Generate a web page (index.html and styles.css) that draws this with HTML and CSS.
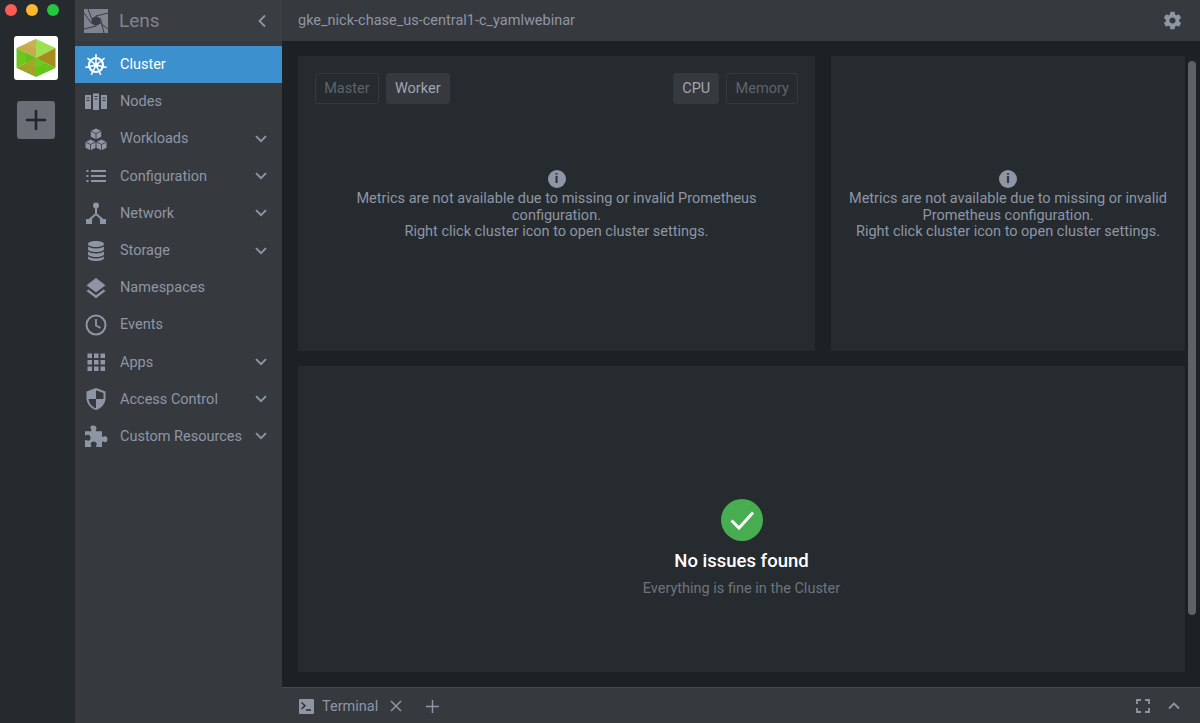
FILE: index.html
```html
<!DOCTYPE html>
<html lang="en">
<head>
    <meta charset="UTF-8">
    <title>Lens</title>
    <link rel="stylesheet" href="styles.css">
</head>
<body>
    <div class="rail">
        <div class="lights">
            <span class="light red"></span>
            <span class="light yellow"></span>
            <span class="light green"></span>
        </div>
        <div class="cluster-tile">
            <svg viewBox="0 0 44 44" width="44" height="44">
                <polygon points="22,3 22,22 2.500,12" fill="#c9ab4f"/>
                <polygon points="22,3 41.500,12 22,22" fill="#9fe052"/>
                <polygon points="2.500,12 22,22 2.500,32" fill="#6cc71f"/>
                <polygon points="41.500,12 41.500,32 22,22" fill="#a98d1c"/>
                <polygon points="2.500,32 22,22 22,41" fill="#a0a22a"/>
                <polygon points="22,22 41.500,32 22,41" fill="#63c51a"/>
                <polygon points="12,17 22,22 12,27" fill="#62c01c"/>
                <polygon points="12,27 22,22 22,32" fill="#a6a628"/>
                <polygon points="22,22 32,27 22,32" fill="#6cca22"/>
                <polygon points="12,7.500 22,3 22,12.500" fill="#ceb155"/>
            </svg>
        </div>
        <div class="add-cluster">
            <svg viewBox="0 0 20 20" width="20" height="20"><path d="M10 0v20M0 10h20" stroke="#23272b" stroke-width="2.600"/></svg>
        </div>
    </div>

    <div class="sidebar">
        <div class="brand">
            <svg class="brand-logo" viewBox="0 0 24 24" width="24" height="24">
                <rect width="24" height="24" fill="#7f8590"/>
                <polygon points="12,7 16.500,9.500 16.500,14.500 12,17 7.500,14.500 7.500,9.500" fill="#3a3d42"/>
                <path d="M7.500 9.500 4 0M12 7 24 4M16.500 9.500 20 24M16.500 14.500 24 20M12 17 0 20M7.500 14.500 0 4" stroke="#3a3d42" stroke-width="1" fill="none"/>
            </svg>
            <span class="brand-name">Lens</span>
            <svg class="collapse" viewBox="0 0 10 14" width="10" height="14"><path d="M8 1.500 2.500 7 8 12.500" fill="none" stroke="#8e96a5" stroke-width="1.800"/></svg>
        </div>
        <ul class="nav">
            <li class="nav-item active">
                <svg class="nav-icon" viewBox="0 0 24 24">
                    <g fill="none" stroke="#fff">
                        <circle cx="12" cy="12" r="7" stroke-width="2.200"/>
                        <path stroke-width="1.500" d="M12 12V1M12 12 20.600 5.100M12 12 22.700 14.400M12 12 16.800 21.900M12 12 7.200 21.900M12 12 1.300 14.400M12 12 3.400 5.100"/>
                    </g>
                    <circle cx="12" cy="12" r="2.600" fill="#fff"/>
                </svg>
                <span>Cluster</span>
            </li>
            <li class="nav-item">
                <svg class="nav-icon" viewBox="0 0 24 24">
                    <path fill="#8e96a5" fill-rule="evenodd" d="M1 5h6v14H1zM9 3.500h6V20H9zM17 5h6v14h-6zM2.500 7.500v1h3v-1zM2.500 10v1h3v-1zM10.500 6v1h3V6zM10.500 8.500v1h3v-1zM18.500 7.500v1h3v-1zM18.500 10v1h3v-1z"/>
                </svg>
                <span>Nodes</span>
            </li>
            <li class="nav-item">
                <svg class="nav-icon" viewBox="0 0 24 24">
                    <path fill="#8e96a5" d="M12 1.500l5.200 2.600v5.600L12 12.300 6.800 9.700V4.100zM6.500 12.500l5 2.500v5.800l-5 2.400-5-2.400V15zM17.500 12.500l5 2.500v5.800l-5 2.400-5-2.400V15z"/>
                    <path fill="none" stroke="#36393e" stroke-width=".8" d="M6.800 4.100 12 6.700l5.200-2.600M12 6.700v5.600M1.500 15l5 2.500 5-2.500M6.500 17.500v5.700M12.500 15l5 2.500 5-2.500M17.500 17.500v5.700"/>
                </svg>
                <span>Workloads</span>
                <svg class="chevron" viewBox="0 0 12 8"><path d="M1 1.200 6 6.200 11 1.200" fill="none" stroke="#8e96a5" stroke-width="1.900"/></svg>
            </li>
            <li class="nav-item">
                <svg class="nav-icon" viewBox="0 0 24 24">
                    <path fill="#8e96a5" d="M2.500 6h2v2h-2zM7 6h15v2H7zM2.500 11h2v2h-2zM7 11h15v2H7zM2.500 16h2v2h-2zM7 16h15v2H7z"/>
                </svg>
                <span>Configuration</span>
                <svg class="chevron" viewBox="0 0 12 8"><path d="M1 1.200 6 6.200 11 1.200" fill="none" stroke="#8e96a5" stroke-width="1.900"/></svg>
            </li>
            <li class="nav-item">
                <svg class="nav-icon" viewBox="0 0 24 24">
                    <circle cx="12" cy="4.500" r="3" fill="#8e96a5"/>
                    <path d="M2 18h6v5H2zM16 18h6v5h-6z" fill="#8e96a5"/>
                    <path d="M12 6v7M12 13l-7 6M12 13l7 6" stroke="#8e96a5" stroke-width="2" fill="none"/>
                </svg>
                <span>Network</span>
                <svg class="chevron" viewBox="0 0 12 8"><path d="M1 1.200 6 6.200 11 1.200" fill="none" stroke="#8e96a5" stroke-width="1.900"/></svg>
            </li>
            <li class="nav-item">
                <svg class="nav-icon" viewBox="0 0 24 24">
                    <path fill="#8e96a5" d="M12 2c4.500 0 8 1.200 8 3s-3.500 3-8 3-8-1.200-8-3 3.500-3 8-3zM4 7.500c1.500 1.300 4.500 2 8 2s6.500-.7 8-2V10c0 1.800-3.500 3-8 3s-8-1.200-8-3zM4 12.500c1.500 1.300 4.500 2 8 2s6.500-.7 8-2V15c0 1.800-3.500 3-8 3s-8-1.200-8-3zM4 17.500c1.500 1.300 4.500 2 8 2s6.500-.7 8-2V19c0 1.800-3.500 3-8 3s-8-1.200-8-3z"/>
                </svg>
                <span>Storage</span>
                <svg class="chevron" viewBox="0 0 12 8"><path d="M1 1.200 6 6.200 11 1.200" fill="none" stroke="#8e96a5" stroke-width="1.900"/></svg>
            </li>
            <li class="nav-item">
                <svg class="nav-icon" viewBox="0 0 24 24">
                    <path fill="#8e96a5" d="M12 2l9.500 7.300L12 16.500 2.500 9.300zM4.500 13.500l7.500 5.700 7.500-5.700 2 1.600L12 22.300 2.500 15.100z"/>
                </svg>
                <span>Namespaces</span>
            </li>
            <li class="nav-item">
                <svg class="nav-icon" viewBox="0 0 24 24">
                    <circle cx="12" cy="12" r="9.500" fill="none" stroke="#8e96a5" stroke-width="2"/>
                    <path d="M12 6v6.500l4.500 2.500" fill="none" stroke="#8e96a5" stroke-width="1.800"/>
                </svg>
                <span>Events</span>
            </li>
            <li class="nav-item">
                <svg class="nav-icon" viewBox="0 0 24 24">
                    <path fill="#8e96a5" d="M3.500 3.500h4.500V8H3.500zM10 3.500h4.500V8H10zM16.500 3.500H21V8h-4.500zM3.500 10H8v4.500H3.500zM10 10h4.500v4.500H10zM16.500 10H21v4.500h-4.500zM3.500 16.500H8V21H3.500zM10 16.500h4.500V21H10zM16.500 16.500H21V21h-4.500z"/>
                </svg>
                <span>Apps</span>
                <svg class="chevron" viewBox="0 0 12 8"><path d="M1 1.200 6 6.200 11 1.200" fill="none" stroke="#8e96a5" stroke-width="1.900"/></svg>
            </li>
            <li class="nav-item">
                <svg class="nav-icon" viewBox="0 0 24 24">
                    <path fill="#8e96a5" d="M12 1l9.500 3.600V11c0 5.600-4 10.300-9.500 12C6.500 21.300 2.500 16.600 2.500 11V4.600zM12 3.200V12H4.600c.4 4.300 3.300 7.800 7.400 9.300V12h7.400c.1-.4.100-.7.100-1V6z"/>
                </svg>
                <span>Access Control</span>
                <svg class="chevron" viewBox="0 0 12 8"><path d="M1 1.200 6 6.200 11 1.200" fill="none" stroke="#8e96a5" stroke-width="1.900"/></svg>
            </li>
            <li class="nav-item">
                <svg class="nav-icon" viewBox="0 0 24 24">
                    <path fill="#8e96a5" d="M9 1.500c2.200 0 3.500 1.300 3.500 2.800 0 1-.7 1.500-.7 2.200 0 .5.500.7 1 .7H18v4.800c0 .6.300 1 .8 1 .7 0 1.200-.7 2.200-.7 1.500 0 2.500 1.300 2.500 3s-1 3-2.500 3c-1 0-1.500-.7-2.200-.7-.5 0-.8.400-.8 1V23h-5c-.6 0-1-.3-1-.8 0-.7.700-1.200.7-2.200 0-1.500-1.300-2.500-3-2.500s-3 1-3 2.500c0 1 .7 1.500.7 2.200 0 .5-.4.800-1 .8H1v-6c0-.6.300-1 .8-1 .7 0 1.200.7 2.200.7 1.500 0 2.500-1.300 2.500-3s-1-3-2.500-3c-1 0-1.500.7-2.200.7-.5 0-.8-.4-.8-1V7.200h5.500c.5 0 1-.2 1-.7 0-.7-.8-1.200-.8-2.200C5.700 2.800 6.800 1.500 9 1.500z"/>
                </svg>
                <span>Custom Resources</span>
                <svg class="chevron" viewBox="0 0 12 8"><path d="M1 1.200 6 6.200 11 1.200" fill="none" stroke="#8e96a5" stroke-width="1.900"/></svg>
            </li>
        </ul>
    </div>

    <div class="main">
        <div class="topbar">
            <span class="cluster-name">gke_nick-chase_us-central1-c_yamlwebinar</span>
            <svg class="settings" viewBox="0 0 24 24" width="21" height="21">
                <path fill="#8e96a5" d="M19.430 12.980c.04-.32.070-.64.070-.98s-.030-.66-.070-.98l2.110-1.650c.19-.15.240-.42.120-.64l-2-3.460c-.12-.22-.39-.3-.61-.22l-2.490 1c-.52-.4-1.080-.73-1.690-.98l-.38-2.650C14.460 2.180 14.250 2 14 2h-4c-.25 0-.46.180-.49.420l-.38 2.650c-.61.250-1.170.590-1.690.98l-2.490-1c-.23-.09-.49 0-.61.220l-2 3.460c-.13.220-.07.490.12.640l2.110 1.650c-.04.320-.07.650-.07.980s.030.660.070.980l-2.110 1.650c-.19.150-.24.420-.12.640l2 3.460c.12.220.39.300.61.220l2.490-1c.52.400 1.080.730 1.690.980l.38 2.650c.030.240.240.420.490.420h4c.25 0 .46-.18.490-.42l.38-2.650c.61-.25 1.170-.59 1.690-.98l2.490 1c.23.090.49 0 .61-.22l2-3.460c.12-.22.070-.49-.12-.64zM12 15.500c-1.930 0-3.500-1.570-3.500-3.500s1.570-3.500 3.500-3.500 3.500 1.570 3.500 3.500-1.570 3.500-3.500 3.500z"/>
            </svg>
        </div>

        <div class="content">
            <div class="panel metrics-main">
                <div class="metric-tabs">
                    <div class="tab-group">
                        <span class="tab">Master</span>
                        <span class="tab selected">Worker</span>
                    </div>
                    <div class="tab-group">
                        <span class="tab selected">CPU</span>
                        <span class="tab">Memory</span>
                    </div>
                </div>
                <div class="no-metrics">
                    <span class="info-dot">i</span>
                    <p>Metrics are not available due to missing or invalid Prometheus configuration.<br>Right click cluster icon to open cluster settings.</p>
                </div>
            </div>
            <div class="panel metrics-side">
                <div class="no-metrics">
                    <span class="info-dot">i</span>
                    <p>Metrics are not available due to missing or invalid Prometheus configuration.<br>Right click cluster icon to open cluster settings.</p>
                </div>
            </div>
            <div class="panel issues">
                <span class="ok-badge">
                    <svg viewBox="0 0 42 42" width="42" height="42"><path d="M10.500 21.500l7.500 7.500L32 13.500" fill="none" stroke="#fff" stroke-width="3"/></svg>
                </span>
                <h2>No issues found</h2>
                <p>Everything is fine in the Cluster</p>
            </div>
        </div>

        <div class="scrollbar"></div>

        <div class="dock">
            <span class="term-icon">
                <svg viewBox="0 0 15 15" width="15" height="15"><path d="M2.500 3.500 6 6.800 2.500 10M7 11h5" fill="none" stroke="#2a2d32" stroke-width="1.400"/></svg>
            </span>
            <span class="term-label">Terminal</span>
            <svg class="term-close" viewBox="0 0 12 12" width="12" height="12"><path d="M1 1l10 10M11 1 1 11" stroke="#8e96a5" stroke-width="1.500"/></svg>
            <svg class="term-add" viewBox="0 0 13 13" width="13" height="13"><path d="M6.500 0v13M0 6.500h13" stroke="#8e96a5" stroke-width="1.500"/></svg>
            <svg class="term-full" viewBox="0 0 14 14" width="14" height="14"><path d="M1 5V1h4M9 1h4v4M13 9v4H9M5 13H1V9" fill="none" stroke="#8e96a5" stroke-width="1.800"/></svg>
            <svg class="term-up" viewBox="0 0 12 8" width="12" height="8"><path d="M1 6.500 6 1.500l5 5" fill="none" stroke="#8e96a5" stroke-width="1.800"/></svg>
        </div>
    </div>
</body>
</html>
```

FILE: styles.css
```css
* {
    box-sizing: border-box;
}
html, body {
    height: 100%;
}
body {
    display: flex;
    margin: 0;
    overflow: hidden;
    background-color: #1e2124;
    color: #8e96a5;
    font-family: Roboto, "Liberation Sans", sans-serif;
    font-size: 14.500px;
}

/* cluster rail */
.rail {
    display: flex;
    flex-direction: column;
    align-items: center;
    flex: 0 0 75px;
    padding-right: 4px;
    background-color: #252a2e;
}
.lights {
    display: flex;
    gap: 9px;
    padding-top: 4px;
    padding-right: 7px;
}
.light {
    width: 12px;
    height: 12px;
    border-radius: 50%;
}
.red { background-color: #fd5c55; }
.yellow { background-color: #fdb92c; }
.green { background-color: #27c63f; }
.cluster-tile {
    width: 44px;
    height: 44px;
    margin-top: 20px;
    background-color: #fff;
    border-radius: 3px;
}
.cluster-tile svg {
    display: block;
}
.add-cluster {
    display: flex;
    align-items: center;
    justify-content: center;
    width: 38px;
    height: 38px;
    margin-top: 21px;
    background-color: #6a6e76;
    border-radius: 3px;
}

/* sidebar */
.sidebar {
    flex: 0 0 207px;
    background-color: #36393e;
}
.brand {
    display: flex;
    align-items: center;
    height: 41px;
    padding-left: 9px;
    background-color: #3a3d42;
}
.brand-name {
    margin-left: 11px;
    font-size: 19px;
    color: #7f8590;
}
.collapse {
    margin-left: auto;
    margin-right: 15px;
}
.nav {
    margin: 5px 0 0;
    padding: 0;
    list-style: none;
}
.nav-item {
    display: flex;
    align-items: center;
    height: 37.200px;
    padding-left: 9px;
    padding-right: 15px;
}
.nav-item.active {
    background-color: #3d90ce;
    color: #fff;
}
.nav-icon {
    flex: none;
    width: 24px;
    height: 24px;
    margin-right: 12px;
}
.chevron {
    width: 12px;
    height: 8px;
    margin-left: auto;
}

/* main area */
.main {
    position: relative;
    display: flex;
    flex-direction: column;
    flex: 1;
    min-width: 0;
}
.topbar {
    display: flex;
    align-items: center;
    justify-content: space-between;
    flex: 0 0 41px;
    padding: 0 17px 0 16px;
    background-color: #36393e;
}
.cluster-name {
    font-size: 14.500px;
}
.content {
    display: grid;
    grid-template-columns: 517px 354px;
    grid-template-rows: 295px 306px;
    gap: 15px 16px;
    flex: 1;
    padding: 15px 15px 15px 16px;
}
.panel {
    background-color: #262b2f;
}
.metrics-main {
    display: flex;
    flex-direction: column;
    padding: 17px 17px 0;
}
.metric-tabs {
    display: flex;
    justify-content: space-between;
}
.tab-group {
    display: flex;
    gap: 7px;
}
.tab {
    height: 31px;
    padding: 0 8.200px;
    line-height: 30px;
    color: #5f646c;
    border: 1px solid #36393e;
    border-radius: 3px;
}
.tab.selected {
    background-color: #36393e;
    color: #a0a6b2;
}
.no-metrics {
    text-align: center;
}
.metrics-main .no-metrics {
    margin-top: 66px;
}
.metrics-side {
    padding: 114px 15px 0;
}
.no-metrics p {
    margin: 3px 0 0;
    line-height: 16.500px;
}
.info-dot {
    display: block;
    width: 18px;
    height: 18px;
    margin: 0 auto;
    border-radius: 50%;
    background-color: #8e96a5;
    color: #262b2f;
    font-size: 13px;
    font-weight: 700;
    line-height: 18px;
}
.issues {
    grid-column: 1 / 3;
    display: flex;
    flex-direction: column;
    align-items: center;
    padding-top: 133px;
}
.ok-badge {
    width: 42px;
    height: 42px;
    border-radius: 50%;
    background-color: #48ad50;
}
.ok-badge svg {
    display: block;
}
.issues h2 {
    margin: 8px 0 0;
    font-size: 18.500px;
    font-weight: 500;
    line-height: 24px;
    color: #fff;
}
.issues p {
    margin: 7px 0 0;
    color: #6f747c;
}

/* overlay scrollbar */
.scrollbar {
    position: absolute;
    top: 61px;
    right: 4px;
    width: 8px;
    height: 554px;
    background-color: #5e6167;
    border-radius: 4px;
}

/* terminal dock */
.dock {
    display: flex;
    align-items: center;
    flex: 0 0 36px;
    padding: 1px 20px 0 17px;
    background-color: #36393e;
    border-top: 1px solid #45484d;
}
.term-icon {
    width: 15px;
    height: 15px;
    background-color: #8e96a5;
    border-radius: 1px;
}
.term-icon svg {
    display: block;
}
.term-label {
    margin-left: 8px;
}
.term-close {
    margin-left: 12px;
}
.term-add {
    margin-left: 24px;
}
.term-full {
    margin-left: auto;
}
.term-up {
    margin-left: 18px;
}
```
